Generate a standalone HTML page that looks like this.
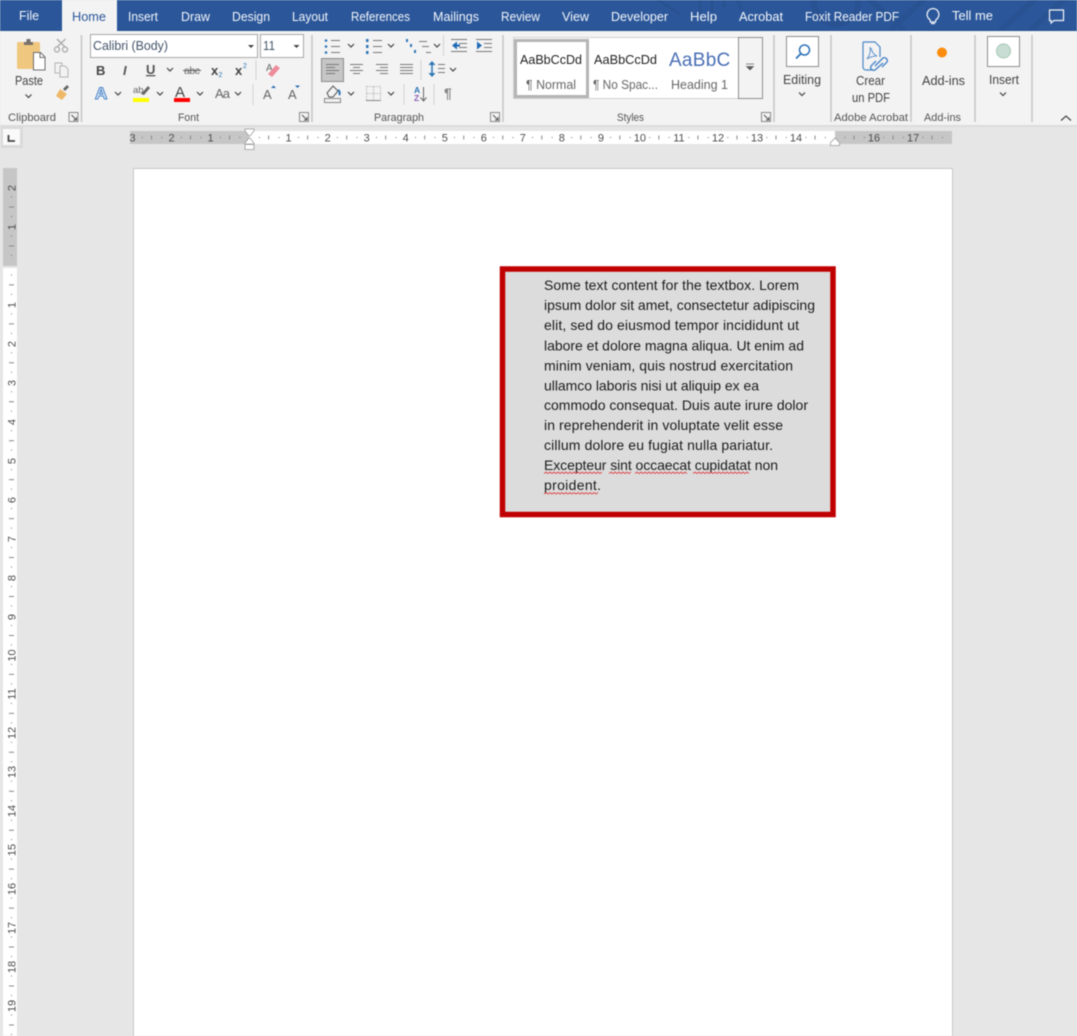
<!DOCTYPE html>
<html lang="en"><head><meta charset="utf-8"><title>Word</title>
<style>
html,body{margin:0;padding:0;width:1077px;height:1036px;overflow:hidden;background:#e6e6e6}
body>svg{display:block;filter:blur(.4px)}
text{font-family:"Liberation Sans",sans-serif}
.t{font-size:12.5px;fill:#f2f5fa}
.g{font-size:11px;fill:#555}
.l{font-size:12.5px;fill:#444}
.r{font-size:11px;fill:#4d4d4d;text-anchor:middle}
.b{font-size:14px;fill:#1c1c1c}
.c{fill:none;stroke:#444;stroke-width:1.2}
.s{stroke:#c6c6c6;stroke-width:1.5}
.ln{stroke:#777;stroke-width:1;fill:none}
.sm{stroke:#d3d3d3;stroke-width:1}
</style></head><body>
<svg width="1077" height="1036" viewBox="0 0 1077 1036" xmlns="http://www.w3.org/2000/svg">
<defs>
<path id="ch" class="c" d="M-3-1.5 0 1.5 3-1.5"/>
<g id="lau"><path d="M-4.5-4.5h9v9h-9z" fill="none" stroke="#888"/><path d="M-2-2 3 3M3 0v3h-3" fill="none" stroke="#555"/></g>
<clipPath id="hc"><rect x="669" y="45" width="62" height="28"/></clipPath>
</defs>
<rect width="1077" height="1036" fill="#e6e6e6"/>
<!-- title bar -->
<rect width="1077" height="31" fill="#2b579a"/>
<g fill="none" stroke="#295292" stroke-width="6">
<path d="M655-2 680 14M700-2V14M712-2V12M724-2V8M736-2 742 10" stroke-width="3"/>
<circle cx="836" cy="2" r="22"/><path d="M868-2 905 31M925-2 890 31M1000 31 1036-2M1030 31 1065-2"/>
</g>
<rect y="30" width="1077" height="1" fill="#24508f"/>
<rect x="62" width="55" height="32" fill="#f3f3f3"/>
<text class="t" lengthAdjust="spacingAndGlyphs" x="19" y="20" textLength="20">File</text>
<text lengthAdjust="spacingAndGlyphs" x="72" y="21" textLength="34" font-size="12.5" fill="#2b579a">Home</text>
<text class="t" lengthAdjust="spacingAndGlyphs" x="128" y="21" textLength="30">Insert</text>
<text class="t" lengthAdjust="spacingAndGlyphs" x="181" y="21" textLength="29">Draw</text>
<text class="t" lengthAdjust="spacingAndGlyphs" x="232" y="21" textLength="38">Design</text>
<text class="t" lengthAdjust="spacingAndGlyphs" x="292" y="21" textLength="36">Layout</text>
<text class="t" lengthAdjust="spacingAndGlyphs" x="351" y="21" textLength="59">References</text>
<text class="t" lengthAdjust="spacingAndGlyphs" x="433" y="21" textLength="46">Mailings</text>
<text class="t" lengthAdjust="spacingAndGlyphs" x="501" y="21" textLength="39">Review</text>
<text class="t" lengthAdjust="spacingAndGlyphs" x="562" y="21" textLength="27">View</text>
<text class="t" lengthAdjust="spacingAndGlyphs" x="611" y="21" textLength="57">Developer</text>
<text class="t" lengthAdjust="spacingAndGlyphs" x="690" y="21" textLength="27">Help</text>
<text class="t" lengthAdjust="spacingAndGlyphs" x="739" y="21" textLength="44">Acrobat</text>
<text class="t" lengthAdjust="spacingAndGlyphs" x="805" y="21" textLength="94">Foxit Reader PDF</text>
<text class="t" lengthAdjust="spacingAndGlyphs" x="952" y="20" textLength="41">Tell me</text>
<path d="M933 8.5a6 6 0 0 1 3.5 10.8c-.8.7-1 1.5-1 2.7h-5c0-1.2-.2-2-1-2.7a6 6 0 0 1 3.5-10.8zM931 23.500h4" fill="none" stroke="#f2f5fa" stroke-width="1.3"/>
<path d="M1049.5 10h14v10.500h-9.500l-3 2.500v-2.500h-1.500z" fill="none" stroke="#f2f5fa" stroke-width="1.2"/>
<!-- ribbon -->
<rect y="31" width="1077" height="94" fill="#f3f3f3"/>
<rect y="125" width="1077" height="2" fill="#dcdcdc"/>
<g class="s">
<path d="M81.5 35v87M312 35v87M503 35v87M774 35v87M831 35v87M911 35v87M975 35v87M1032 35v87"/>
</g>
<text class="g" lengthAdjust="spacingAndGlyphs" x="8" y="121" textLength="48">Clipboard</text>
<text class="g" lengthAdjust="spacingAndGlyphs" x="178" y="121" textLength="21">Font</text>
<text class="g" lengthAdjust="spacingAndGlyphs" x="374" y="121" textLength="50">Paragraph</text>
<text class="g" lengthAdjust="spacingAndGlyphs" x="617" y="121" textLength="27">Styles</text>
<text class="g" lengthAdjust="spacingAndGlyphs" x="834" y="121" textLength="74">Adobe Acrobat</text>
<text class="g" lengthAdjust="spacingAndGlyphs" x="924" y="121" textLength="37">Add-ins</text>
<use href="#lau" x="73.5" y="117"/><use href="#lau" x="304" y="117"/><use href="#lau" x="495" y="117"/><use href="#lau" x="766" y="117"/>
<path class="c" d="M1061 120.500 1066 116l5 4.500"/>
<!-- clipboard -->
<rect x="17" y="42" width="23" height="27" rx="1.5" fill="#efc77f"/>
<path d="M24 45v-3h2.500v-3h4v3h2.500v3z" fill="#77706a"/>
<path d="M33.5 52.500h7l4.500 4.500v13h-11.500z" fill="#fff" stroke="#6d6d6d"/>
<path d="M40 52.500v5h5" fill="none" stroke="#6d6d6d"/>
<text class="l" lengthAdjust="spacingAndGlyphs" x="15" y="85" textLength="28">Paste</text>
<use href="#ch" x="28.5" y="96"/>
<g fill="none" stroke="#aaa" stroke-width="1.3"><path d="M57 39 65 47M65.500 39 57 47"/><circle cx="57" cy="49.500" r="2.500"/><circle cx="65" cy="49.500" r="2.500"/></g>
<g fill="#f3f3f3" stroke="#b4b4b4"><path d="M55 63h7v10h-7z"/><path d="M60 66h5l3 3v8h-8z"/></g>
<path d="M56 96 60 89 67 94 62 100z" fill="#eeb868"/><path d="M63 89l4-4 2 2-4 4z" fill="#666"/>
<!-- font -->
<rect x="90.5" y="34.500" width="167" height="23" fill="#fff" stroke="#a8a8a8"/>
<rect x="260.5" y="34.500" width="43" height="23" fill="#fff" stroke="#a8a8a8"/>
<text lengthAdjust="spacingAndGlyphs" x="93" y="50" textLength="75" font-size="12.5" fill="#44546a">Calibri (Body)</text>
<text lengthAdjust="spacingAndGlyphs" x="263" y="50" textLength="12" font-size="12.5" fill="#44546a">11</text>
<path d="M248 45h6l-3 3zM293.500 45h6l-3 3z" fill="#444"/>
<text x="96" y="75" font-size="13" font-weight="bold" fill="#444">B</text>
<text x="123" y="75" font-size="13" font-weight="bold" font-style="italic" fill="#555">I</text>
<text x="146" y="74" font-size="13" font-weight="bold" fill="#555" text-decoration="underline">U</text>
<use href="#ch" x="170" y="69.5"/>
<text x="184" y="74" font-size="10.5" fill="#666" textLength="16">abc</text><path d="M183 70.500h18" stroke="#666"/>
<text x="211" y="75" font-size="13" font-weight="bold" fill="#444">x</text><text x="218.5" y="77" font-size="7" fill="#2e75b6">2</text>
<text x="235" y="75" font-size="13" font-weight="bold" fill="#444">x</text><text x="243" y="68" font-size="7" fill="#2e75b6">2</text>
<path class="sm" d="M256 60v20M253 84v21"/>
<text x="266" y="71" font-size="10" fill="#666">A</text>
<path d="M268 74 276 65 280 68 272 77z" fill="#ef8a9a"/>
<text x="95" y="99" font-size="17" fill="#fff" stroke="#4a86c8" stroke-width="1.1" font-weight="bold">A</text>
<use href="#ch" x="118" y="93.5"/>
<text x="133" y="93" font-size="9.5" fill="#666">ab</text><path d="M141 94 148 86l2 2-6 7z" fill="#666"/>
<rect x="133" y="98" width="16" height="4" fill="#ffff00"/>
<use href="#ch" x="160" y="93.5"/>
<text x="175" y="97" font-size="15" fill="#444">A</text><rect x="174" y="98" width="16" height="4" fill="#f00"/>
<use href="#ch" x="200" y="93.5"/>
<text x="215" y="98" font-size="13" fill="#666" textLength="15">Aa</text>
<use href="#ch" x="238" y="93.5"/>
<text x="263" y="99" font-size="13" fill="#666">A</text><path d="M271 88l2.500-2.500 2.500 2.500z" fill="#2b6cb0"/>
<text x="288" y="99" font-size="13" fill="#666">A</text><path d="M295 85.500l2.500 2.500 2.500-2.500z" fill="#2b6cb0"/>
<!-- paragraph -->
<path class="ln" d="M331 40.500h9M331 46.500h9M331 52.500h9M373 40.500h9M373 46.500h9M373 52.500h9M419 41.500h8M422 46.500h7M426 52.500h5"/>
<g fill="#2e75b6"><circle cx="326" cy="40.500" r="1.3"/><circle cx="326" cy="46.500" r="1.3"/><circle cx="326" cy="52.500" r="1.3"/><rect x="366" y="39" width="2.5" height="3"/><rect x="366" y="45" width="2.5" height="3"/><rect x="366" y="51" width="2.5" height="3"/><rect x="406" y="39" width="2" height="3"/><rect x="410" y="44" width="2" height="3"/><rect x="414" y="50" width="2" height="3"/></g>
<use href="#ch" x="351" y="45.5"/><use href="#ch" x="391" y="45.5"/><use href="#ch" x="437" y="45.5"/>
<path class="sm" d="M443.5 35v21M421 60v20M404 84v21M434 84v21"/>
<path class="ln" d="M451 39.500h16M459 43.500h8M459 47.500h8M451 51.500h16M476 39.500h16M484 43.500h8M484 47.500h8M476 51.500h16"/>
<path d="M452 45.500l5-4v8zM482 45.500l-5-4v8z" fill="#1f6ab5"/>
<path d="M457 45.500h3M477 45.500h3" stroke="#1f6ab5" stroke-width="2"/>
<rect x="321.5" y="58.500" width="22" height="23" fill="#c6c6c6" stroke="#8e8e8e"/>
<path d="M326 64.500h13M326 67.500h9M326 70.500h13M326 73.500h9" stroke="#777"/>
<path class="ln" d="M350 64.500h13M353 67.500h7M350 70.500h13M353 73.500h7M376 64.500h12M380 67.500h8M376 70.500h12M380 73.500h8M400 64.500h13M400 67.500h13M400 70.500h13M400 73.500h13"/>
<path d="M432 62v14" stroke="#2e75b6" stroke-width="1.5"/><path d="M428.500 65l3.500-4 3.500 4zM428.500 73l3.500 4 3.500-4z" fill="#2e75b6"/>
<path class="ln" d="M438 64.500h7M438 68.500h7M438 72.500h7"/><use href="#ch" x="453" y="69.5"/>
<rect x="324.5" y="98.500" width="16" height="4" fill="#f3f3f3" stroke="#888"/>
<path d="M327 93 333 86l5 5-5 6h-4z" fill="#f3f3f3" stroke="#555"/><path d="M338 90c2 1 2 4 1 5" stroke="#2e75b6" stroke-width="2" fill="none"/>
<use href="#ch" x="351" y="93.5"/>
<path d="M366.5 86.500h14v14h-14zM373.500 86.500v14M366.500 93.500h14" fill="none" stroke="#bbb" stroke-dasharray="1.5 1"/><path d="M366 100.500h15" stroke="#888"/>
<use href="#ch" x="391" y="93.5"/>
<text x="414" y="93" font-size="8.5" font-weight="bold" fill="#2e75b6">A</text><text x="414" y="101" font-size="8.5" font-weight="bold" fill="#8e5fb5">Z</text>
<path d="M423.5 87v13M420.500 97.500l3 3.500 3-3.500" fill="none" stroke="#666"/>
<text x="444" y="98" font-size="14" font-weight="bold" fill="#888">¶</text>
<!-- styles -->
<rect x="513.5" y="37.500" width="225" height="61" fill="#fff" stroke="#d0d0d0"/>
<rect x="515.5" y="40.500" width="72" height="56" fill="#fff" stroke="#b5b5b5" stroke-width="3"/>
<text lengthAdjust="spacingAndGlyphs" x="520" y="64" font-size="12.5" fill="#222" textLength="62">AaBbCcDd</text>
<text lengthAdjust="spacingAndGlyphs" x="526" y="89" font-size="12.5" fill="#666" textLength="50">¶ Normal</text>
<text lengthAdjust="spacingAndGlyphs" x="594" y="64" font-size="12.5" fill="#222" textLength="63">AaBbCcDd</text>
<text lengthAdjust="spacingAndGlyphs" x="593" y="89" font-size="12.5" fill="#666" textLength="65">¶ No Spac...</text>
<g clip-path="url(#hc)"><text lengthAdjust="spacing" x="669" y="66" font-size="19" fill="#4a6fb5" textLength="71">AaBbCc</text></g>
<text lengthAdjust="spacingAndGlyphs" x="671" y="89" font-size="12.5" fill="#666" textLength="57">Heading 1</text>
<rect x="738.5" y="37.500" width="24" height="61" fill="#f3f3f3" stroke="#8e8e8e"/>
<path d="M746 64h8M746.500 66.500h7l-3.500 3.500z" fill="#555" stroke="#666" stroke-width=".7"/>
<!-- editing -->
<rect x="786.5" y="36.500" width="32" height="30" fill="#fff" stroke="#8e8e8e"/>
<circle cx="804.5" cy="50" r="5" fill="none" stroke="#2f72b8" stroke-width="1.5"/><path d="M800.5 54 796 58.500" stroke="#2f72b8" stroke-width="1.8"/>
<text class="l" lengthAdjust="spacingAndGlyphs" x="783" y="84" textLength="38">Editing</text><use href="#ch" x="802" y="94"/>
<!-- acrobat -->
<path d="M863 42h12l5 5v10M872 70h-6a3 3 0 0 1-3-3V42" fill="none" stroke="#4a86c8" stroke-width="1.2" stroke-linejoin="round"/>
<path d="M870 47c1 6-1 9-3 12 3-2 6-3 10-3-3-1-5-4-6-8" fill="none" stroke="#5f92cc"/>
<path d="M875 66l8-8a3 3 0 0 1 4 4l-5 5M883 63l-8 7a3 3 0 0 1-4-4l5-5" fill="none" stroke="#4a86c8" stroke-width="1.4"/>
<text class="l" lengthAdjust="spacingAndGlyphs" x="856" y="85" textLength="29">Crear</text>
<text class="l" lengthAdjust="spacingAndGlyphs" x="852" y="102" textLength="38">un PDF</text>
<!-- add-ins -->
<circle cx="942" cy="52.500" r="5" fill="#fb8c0f"/>
<text class="l" lengthAdjust="spacingAndGlyphs" x="922" y="85" textLength="43">Add-ins</text>
<!-- insert -->
<rect x="987.5" y="36.500" width="32" height="30" fill="#fff" stroke="#8e8e8e"/>
<circle cx="1003.5" cy="51" r="7" fill="#c8ded4" stroke="#a4c6b6"/>
<text class="l" lengthAdjust="spacingAndGlyphs" x="989" y="84" textLength="30">Insert</text><use href="#ch" x="1003" y="94"/>
<!-- tab stop -->
<rect x="1" y="127" width="22" height="21" fill="#dadada"/>
<rect x="3" y="129" width="17" height="16" fill="#fafafa"/>
<path d="M8.5 135v6H15" fill="none" stroke="#444" stroke-width="1.8"/>
<!-- horizontal ruler -->
<rect x="130" y="131" width="822" height="13" fill="#c6c6c6"/>
<rect x="249" y="131" width="586" height="13" fill="#fff"/>
<line x1="141.8" y1="137.500" x2="950" y2="137.500" stroke="#777" stroke-dasharray="1 18.515"/>
<line x1="151" y1="137.500" x2="950" y2="137.500" stroke="#888" stroke-width="4" stroke-dasharray="1 38.030"/>
<g>
<text x="132.5" y="141.500" class="r">3</text><text x="171.5" y="141.500" class="r">2</text><text x="210.5" y="141.500" class="r">1</text>
<text x="288.6" y="141.500" class="r">1</text><text x="327.7" y="141.500" class="r">2</text><text x="366.7" y="141.500" class="r">3</text><text x="405.7" y="141.500" class="r">4</text><text x="444.8" y="141.500" class="r">5</text><text x="483.8" y="141.500" class="r">6</text><text x="522.8" y="141.500" class="r">7</text><text x="561.8" y="141.500" class="r">8</text><text x="600.9" y="141.500" class="r">9</text><text x="639.9" y="141.500" class="r">10</text><text x="678.9" y="141.500" class="r">11</text><text x="718" y="141.500" class="r">12</text><text x="757" y="141.500" class="r">13</text><text x="796" y="141.500" class="r">14</text><text x="874" y="141.500" class="r">16</text><text x="913.1" y="141.500" class="r">17</text>
</g>
<path d="M245 129h9v2l-4 5-1 0-4-5zM245 143l4-5 1 0 4 5v1h-9zM245 144.500h9v5h-9z" fill="#fff" stroke="#9a9a9a" stroke-width=".8"/>
<path d="M830.5 145.500v-3l4.500-4.500 4.500 4.500v3z" fill="#fff" stroke="#9a9a9a" stroke-width=".8"/>
<!-- vertical ruler -->
<rect x="3" y="168" width="14" height="98" fill="#c6c6c6"/>
<rect x="3" y="268" width="14" height="768" fill="#fff"/>
<line x1="11.5" y1="196.500" x2="11.5" y2="1036" stroke="#777" stroke-dasharray="1 18.475"/>
<line x1="11.5" y1="206.500" x2="11.5" y2="1036" stroke="#888" stroke-width="5" stroke-dasharray="1 37.950"/>
<g>
<text class="r" transform="rotate(-90 15.5 188)" x="15.5" y="188">2</text>
<text class="r" transform="rotate(-90 15.5 227)" x="15.5" y="227">1</text>
<text class="r" transform="rotate(-90 15.5 305)" x="15.5" y="305">1</text>
<text class="r" transform="rotate(-90 15.5 344)" x="15.5" y="344">2</text>
<text class="r" transform="rotate(-90 15.5 383)" x="15.5" y="383">3</text>
<text class="r" transform="rotate(-90 15.5 422)" x="15.5" y="422">4</text>
<text class="r" transform="rotate(-90 15.5 461)" x="15.5" y="461">5</text>
<text class="r" transform="rotate(-90 15.5 500)" x="15.5" y="500">6</text>
<text class="r" transform="rotate(-90 15.5 539)" x="15.5" y="539">7</text>
<text class="r" transform="rotate(-90 15.5 578)" x="15.5" y="578">8</text>
<text class="r" transform="rotate(-90 15.5 617)" x="15.5" y="617">9</text>
<text class="r" transform="rotate(-90 15.5 655.5)" x="15.5" y="655.5">10</text>
<text class="r" transform="rotate(-90 15.5 694)" x="15.5" y="694">11</text>
<text class="r" transform="rotate(-90 15.5 733)" x="15.5" y="733">12</text>
<text class="r" transform="rotate(-90 15.5 772)" x="15.5" y="772">13</text>
<text class="r" transform="rotate(-90 15.5 811)" x="15.5" y="811">14</text>
<text class="r" transform="rotate(-90 15.5 850)" x="15.5" y="850">15</text>
<text class="r" transform="rotate(-90 15.5 889)" x="15.5" y="889">16</text>
<text class="r" transform="rotate(-90 15.5 928)" x="15.5" y="928">17</text>
<text class="r" transform="rotate(-90 15.5 967)" x="15.5" y="967">18</text>
<text class="r" transform="rotate(-90 15.5 1006)" x="15.5" y="1006">19</text>
</g>
<!-- page -->
<rect x="133.5" y="168.500" width="819" height="880" fill="#fff" stroke="#c8c8c8"/>
<!-- textbox -->
<rect x="502.5" y="269" width="330.5" height="245.5" fill="#dcdcdc" stroke="#c00000" stroke-width="5.5"/>
<text class="b" x="544" y="290" textLength="255">Some text content for the textbox. Lorem</text>
<text class="b" x="544" y="310" textLength="271">ipsum dolor sit amet, consectetur adipiscing</text>
<text class="b" x="544" y="330" textLength="255">elit, sed do eiusmod tempor incididunt ut</text>
<text class="b" x="544" y="350.5" textLength="260">labore et dolore magna aliqua. Ut enim ad</text>
<text class="b" x="544" y="370.5" textLength="249">minim veniam, quis nostrud exercitation</text>
<text class="b" x="544" y="390.5" textLength="215">ullamco laboris nisi ut aliquip ex ea</text>
<text class="b" x="544" y="410" textLength="264">commodo consequat. Duis aute irure dolor</text>
<text class="b" x="544" y="430" textLength="239">in reprehenderit in voluptate velit esse</text>
<text class="b" x="544" y="450" textLength="229">cillum dolore eu fugiat nulla pariatur.</text>
<text class="b" x="544" y="470" textLength="234">Excepteur sint occaecat cupidatat non</text>
<text class="b" x="544" y="490" textLength="57">proident.</text>
<g fill="none" stroke="#e0262a" stroke-width=".9" opacity=".8">
<path d="M544 473.500l2-1.500 2 1.500 2-1.500 2 1.500 2-1.500 2 1.500 2-1.500 2 1.500 2-1.500 2 1.500 2-1.500 2 1.500 2-1.500 2 1.500 2-1.500 2 1.500 2-1.500 2 1.500 2-1.500 2 1.500 2-1.500 2 1.500 2-1.500 2 1.500 2-1.500 2 1.500 2-1.500 2 1.500 2-1.500"/>
<path d="M609 473.500l2-1.500 2 1.500 2-1.500 2 1.500 2-1.500 2 1.500 2-1.500 2 1.500 2-1.500 2 1.500 2-1.500"/>
<path d="M635 473.500l2-1.500 2 1.500 2-1.500 2 1.500 2-1.500 2 1.500 2-1.500 2 1.500 2-1.500 2 1.500 2-1.500 2 1.500 2-1.500 2 1.500 2-1.500 2 1.500 2-1.500 2 1.500 2-1.500 2 1.500 2-1.500 2 1.500 2-1.500 2 1.500 2-1.500 2 1.500"/>
<path d="M693 473.500l2-1.500 2 1.500 2-1.500 2 1.500 2-1.500 2 1.500 2-1.500 2 1.500 2-1.500 2 1.500 2-1.500 2 1.500 2-1.500 2 1.500 2-1.500 2 1.500 2-1.500 2 1.500 2-1.500 2 1.500 2-1.500 2 1.500 2-1.500 2 1.500 2-1.500 2 1.500 2-1.500 2 1.500"/>
<path d="M544 494l2-1.500 2 1.500 2-1.500 2 1.500 2-1.500 2 1.500 2-1.500 2 1.500 2-1.500 2 1.500 2-1.500 2 1.500 2-1.500 2 1.500 2-1.500 2 1.500 2-1.500 2 1.500 2-1.500 2 1.500 2-1.500 2 1.500 2-1.500 2 1.500 2-1.500 2 1.500 2-1.500"/>
</g>
</svg>
</body></html>
